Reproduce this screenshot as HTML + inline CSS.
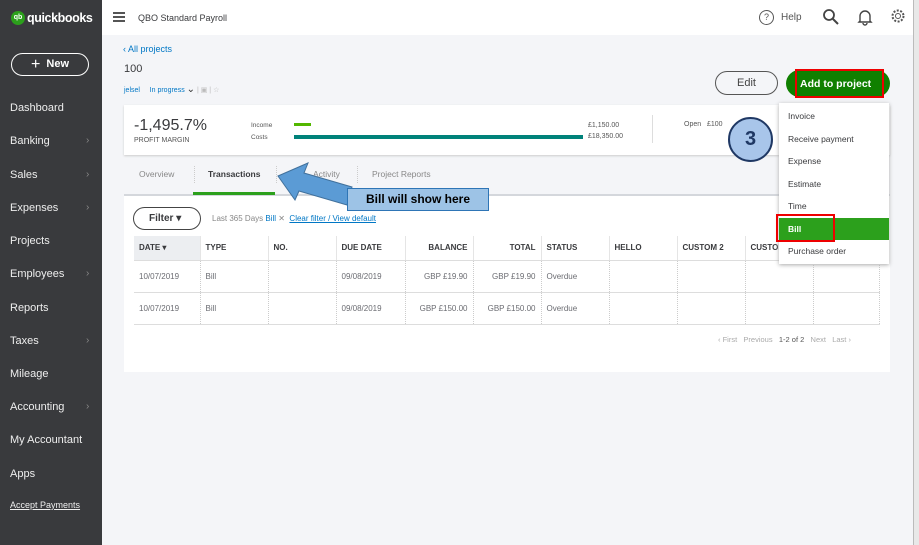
<!DOCTYPE html>
<html><head><meta charset="utf-8"><style>
*{margin:0;padding:0;box-sizing:border-box}
body{width:919px;height:545px;overflow:hidden;font-family:"Liberation Sans",sans-serif;background:#f4f5f8;position:relative;color:#393a3d}
.a{position:absolute}
.side{left:0;top:0;width:102px;height:545px;background:#393a3d;color:#fff}
.side .it{position:absolute;left:10px;font-size:11px;color:#eee}
.side .ch{position:absolute;left:86px;font-size:10px;color:#888}
.top{left:102px;top:0;width:811px;height:35px;background:#fff}
.card{background:#fff}
table{border-collapse:collapse;font-size:8px}
td,th{height:24px;border-right:1px dotted #ccc;padding:0 5px;text-align:left;white-space:nowrap}
th{font-weight:bold;color:#393a3d;border-bottom:1px solid #ddd;border-right:1px solid #e5e5e5}
td{height:32px;color:#6b6c72;border-bottom:1px solid #ddd}
.r{text-align:right}
.dd div{height:22.5px;line-height:22.5px;padding-left:9px;font-size:8.5px;color:#393a3d}
</style></head><body>
<div class="a side">
 <div class="a" style="left:11px;top:11px;width:14px;height:14px;border-radius:50%;background:#2ca01c;font-size:7px;font-weight:bold;text-align:center;line-height:14px">qb</div>
 <div class="a" style="left:27px;top:11px;font-size:12.5px;font-weight:bold;letter-spacing:-0.4px">quickbooks</div>
 <div class="a" style="left:11px;top:53px;width:78px;height:23px;border:1.5px solid #fff;border-radius:12px;text-align:center;line-height:20px;font-size:11px;font-weight:bold"><span style="font-size:16px;font-weight:normal;vertical-align:-2px">+</span>&nbsp; New</div>
 <div class="it" style="top:102px">Dashboard</div>
 <div class="it" style="top:135px">Banking</div><div class="ch" style="top:135px">›</div>
 <div class="it" style="top:169px">Sales</div><div class="ch" style="top:169px">›</div>
 <div class="it" style="top:202px">Expenses</div><div class="ch" style="top:202px">›</div>
 <div class="it" style="top:235px">Projects</div>
 <div class="it" style="top:268px">Employees</div><div class="ch" style="top:268px">›</div>
 <div class="it" style="top:302px">Reports</div>
 <div class="it" style="top:335px">Taxes</div><div class="ch" style="top:335px">›</div>
 <div class="it" style="top:368px">Mileage</div>
 <div class="it" style="top:401px">Accounting</div><div class="ch" style="top:401px">›</div>
 <div class="it" style="top:434px">My Accountant</div>
 <div class="it" style="top:468px">Apps</div>
 <div class="it" style="top:500px;font-size:9px;text-decoration:underline">Accept Payments</div>
</div>
<div class="a" style="left:913px;top:0;width:6px;height:545px;background:#e8e8e8;border-left:1px solid #bbb"></div>
<div class="a top">
 <div class="a" style="left:11px;top:12px;width:12px;height:2px;background:#555;box-shadow:0 4px #555,0 8px #555"></div>
 <div class="a" style="left:36px;top:13px;font-size:9px;color:#393a3d">QBO Standard Payroll</div>
 <div class="a" style="left:657px;top:10px;width:15px;height:15px;border:1.5px solid #555;border-radius:50%;font-size:9px;text-align:center;line-height:12px;color:#555">?</div>
 <div class="a" style="left:679px;top:12px;font-size:10px;color:#555">Help</div>
 <svg class="a" style="left:720px;top:8px" width="18" height="18"><circle cx="7" cy="7" r="5" fill="none" stroke="#444" stroke-width="1.8"/><path d="M11 11l5 5" stroke="#444" stroke-width="2"/></svg>
 <svg class="a" style="left:755px;top:8px" width="16" height="18"><path d="M3 13V8a5 5 0 0 1 10 0v5l1 1H2z M6 15a2 2 0 0 0 4 0" fill="none" stroke="#444" stroke-width="1.4"/></svg>
 <svg class="a" style="left:788px;top:8px" width="16" height="16"><circle cx="8" cy="8" r="5.5" fill="none" stroke="#555" stroke-width="2" stroke-dasharray="2 1.5"/><circle cx="8" cy="8" r="2.5" fill="none" stroke="#555" stroke-width="1"/></svg>
</div>
<div class="a" style="left:123px;top:44px;font-size:9px;color:#0077c5">‹ All projects</div>
<div class="a" style="left:124px;top:63px;font-size:11px;color:#393a3d">100</div>
<div class="a" style="left:124px;top:84px;font-size:7px;color:#0077c5">jelsel &nbsp;&nbsp;&nbsp; In progress <span style="color:#333;font-size:10px">⌄</span> <span style="color:#bbb">| ▣ | ☆</span></div>
<div class="a" style="left:715px;top:71px;width:63px;height:24px;border:1.5px solid #555;border-radius:12px;text-align:center;line-height:23px;font-size:11px;color:#444">Edit</div>
<div class="a" style="left:786px;top:70px;width:104px;height:27px;background:#108000;border-radius:14px"></div>
<div class="a" style="left:795px;top:69px;width:89px;height:29px;border:2px solid #e00;color:#fff;font-size:10.5px;line-height:27px;padding-left:3px;font-weight:bold">Add to project ⌄</div>
<div class="a card" style="left:124px;top:105px;width:766px;height:50px;box-shadow:0 1px 2px #ccc">
 <div class="a" style="left:10px;top:12px;font-size:16px">-1,495.7%</div>
 <div class="a" style="left:10px;top:32px;font-size:7px;color:#555">PROFIT MARGIN</div>
 <div class="a" style="left:127px;top:17px;font-size:6.5px;color:#555">Income</div>
 <div class="a" style="left:127px;top:29px;font-size:6.5px;color:#555">Costs</div>
 <div class="a" style="left:170px;top:18px;width:17px;height:3px;background:#53b700"></div>
 <div class="a" style="left:170px;top:30px;width:289px;height:4px;background:#00827a"></div>
 <div class="a" style="left:464px;top:15px;font-size:7px;color:#555;line-height:11px">£1,150.00<br>£18,350.00</div>
 <div class="a" style="left:528px;top:10px;width:1px;height:28px;background:#ddd"></div>
 <div class="a" style="left:560px;top:16px;font-size:7px;color:#555">Open &nbsp;&nbsp;£100</div>
</div>
<div class="a" style="left:139px;top:169px;font-size:8.5px;color:#888">Overview</div>
<div class="a" style="left:208px;top:169px;font-size:8.5px;font-weight:bold;color:#393a3d">Transactions</div>
<div class="a" style="left:313px;top:169px;font-size:8.5px;color:#888">Activity</div>
<div class="a" style="left:372px;top:169px;font-size:8.5px;color:#888">Project Reports</div>
<div class="a" style="left:194px;top:166px;height:17px;border-left:1px dotted #ccc"></div>
<div class="a" style="left:276px;top:166px;height:17px;border-left:1px dotted #ccc"></div>
<div class="a" style="left:357px;top:166px;height:17px;border-left:1px dotted #ccc"></div>
<div class="a" style="left:124px;top:194px;width:766px;height:2px;background:#d4d7dc"></div>
<div class="a" style="left:193px;top:192px;width:82px;height:3px;background:#2ca01c"></div>
<div class="a card" style="left:124px;top:196px;width:766px;height:176px">
 <div class="a" style="left:9px;top:11px;width:68px;height:23px;border:1.5px solid #444;border-radius:12px;font-size:10px;font-weight:bold;line-height:22px;padding-left:15px">Filter ▾</div>
 <div class="a" style="left:88px;top:18px;font-size:8px;color:#888">Last 365 Days <span style="color:#0077c5">Bill</span> ✕ &nbsp;<span style="color:#0077c5;text-decoration:underline">Clear filter / View default</span></div>
 <table class="a" style="left:10px;top:40px;width:746px">
  <tr><th style="width:66px;background:#eceef1">DATE ▾</th><th style="width:68px">TYPE</th><th style="width:68px">NO.</th><th style="width:69px">DUE DATE</th><th class="r" style="width:68px">BALANCE</th><th class="r" style="width:68px">TOTAL</th><th style="width:68px">STATUS</th><th style="width:68px">HELLO</th><th style="width:68px">CUSTOM 2</th><th style="width:68px">CUSTOM</th><th></th></tr>
  <tr><td>10/07/2019</td><td>Bill</td><td></td><td>09/08/2019</td><td class="r">GBP £19.90</td><td class="r">GBP £19.90</td><td>Overdue</td><td></td><td></td><td></td><td></td></tr>
  <tr><td>10/07/2019</td><td>Bill</td><td></td><td>09/08/2019</td><td class="r">GBP £150.00</td><td class="r">GBP £150.00</td><td>Overdue</td><td></td><td></td><td></td><td></td></tr>
 </table>
 <div class="a" style="left:594px;top:139px;font-size:7.5px;color:#aaa">‹ First &nbsp; Previous &nbsp; <span style="color:#555">1-2 of 2</span> &nbsp; Next &nbsp; Last ›</div>
</div>
<div class="a dd" style="left:779px;top:103px;width:110px;height:161px;background:#fff;box-shadow:0 1px 4px #aaa;padding-top:2px">
 <div>Invoice</div><div>Receive payment</div><div>Expense</div><div>Estimate</div><div>Time</div>
 <div style="background:#2ca01c;color:#fff;font-weight:bold">Bill</div><div>Purchase order</div>
</div>
<div class="a" style="left:776px;top:214px;width:59px;height:28px;border:2px solid #e00"></div>
<div class="a" style="left:728px;top:117px;width:45px;height:45px;border-radius:50%;background:#a8c5ea;border:2px solid #1f3864;text-align:center;line-height:41px;font-size:20px;font-weight:bold;color:#1f3864">3</div>
<svg class="a" style="left:270px;top:160px" width="100" height="60"><path d="M8 16 L38 3 L34 13 L82 27 L77 45 L29 31 L25 40 Z" fill="#5b9bd5" stroke="#41719c" stroke-width="1"/></svg>
<div class="a" style="left:347px;top:188px;width:142px;height:23px;background:#9dc3e6;border:1px solid #2e75b6;font-size:12px;font-weight:bold;color:#000;text-align:center;line-height:21px">Bill will show here</div>
</body></html>
